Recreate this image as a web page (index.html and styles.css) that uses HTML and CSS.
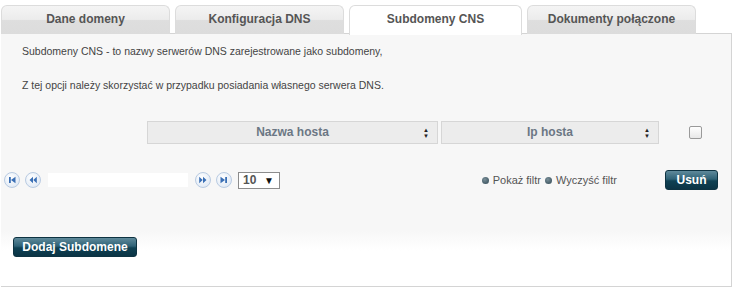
FILE: index.html
```html
<!DOCTYPE html>
<html lang="pl">
<head>
    <meta charset="UTF-8">
    <title>Subdomeny CNS</title>
    <link rel="stylesheet" href="styles.css">
</head>
<body>
    <div class="tabs">
        <div class="tab">Dane domeny</div>
        <div class="tab">Konfiguracja DNS</div>
        <div class="tab active">Subdomeny CNS</div>
        <div class="tab">Dokumenty połączone</div>
    </div>

    <div class="panel">
        <p class="info">Subdomeny CNS - to nazwy serwerów DNS zarejestrowane jako subdomeny,</p>
        <p class="info">Z tej opcji należy skorzystać w przypadku posiadania własnego serwera DNS.</p>

        <div class="grid-head">
            <div class="col col-name">Nazwa hosta <span class="sort">&#9650;<br>&#9660;</span></div>
            <div class="col col-ip">Ip hosta <span class="sort">&#9650;<br>&#9660;</span></div>
            <div class="check-cell"><span class="check"></span></div>
        </div>

        <div class="toolbar">
            <div class="pager">
                <span class="pbtn"><svg width="10" height="10" viewBox="0 0 10 10"><rect x="2" y="2" width="1.8" height="6" fill="#3a6fb5"/><path d="M8.5 1.8 L4 5 L8.5 8.2 Z" fill="#3a6fb5"/></svg></span>
                <span class="pbtn"><svg width="10" height="10" viewBox="0 0 10 10"><path d="M5 1.8 L1.5 5 L5 8.2 Z M8.8 1.8 L5.3 5 L8.8 8.2 Z" fill="#3a6fb5"/></svg></span>
                <span class="pinfo"></span>
                <span class="pbtn"><svg width="10" height="10" viewBox="0 0 10 10"><path d="M1.2 1.8 L4.7 5 L1.2 8.2 Z M5 1.8 L8.5 5 L5 8.2 Z" fill="#3a6fb5"/></svg></span>
                <span class="pbtn"><svg width="10" height="10" viewBox="0 0 10 10"><path d="M1.5 1.8 L6 5 L1.5 8.2 Z" fill="#3a6fb5"/><rect x="6.2" y="2" width="1.8" height="6" fill="#3a6fb5"/></svg></span>
                <span class="size">10 <span class="arrow">&#9660;</span></span>
            </div>
            <div class="filters">
                <span class="dot"></span>Pokaż filtr
                <span class="dot"></span>Wyczyść filtr
            </div>
            <button class="btn btn-del">Usuń</button>
        </div>

        <div class="bottom">
            <button class="btn">Dodaj Subdomene</button>
        </div>
    </div>
</body>
</html>
```

FILE: styles.css
```css
body {
    margin: 0;
    padding: 5px 1px 0 1px;
    background-color: #fff;
    font-family: "Liberation Sans", Arial, sans-serif;
    font-size: 10.5px;
    color: #444;
    width: 731px;
}

.tabs {
    display: flex;
    gap: 5px;
    height: 29px;
}

.tab {
    width: 167px;
    height: 28px;
    border: 1px solid #dcdcdc;
    border-bottom: none;
    border-radius: 6px 6px 0 0;
    background: linear-gradient(#f4f4f4 0%, #ececec 48%, #dedede 52%, #dcdcdc 100%);
    color: #555;
    font-weight: bold;
    font-size: 12px;
    text-align: center;
    line-height: 27px;
}

.tab.active {
    width: 171px;
    background: #fff;
    height: 29px;
    position: relative;
    z-index: 1;
}

.panel {
    border: 1px solid #d4d4d4;
    border-left: none;
    background: linear-gradient(#f7f7f7 0%, #f7f7f7 78%, #fff 86%, #fff 100%);
    height: 252px;
    margin-top: -1px;
}

.info {
    margin: 0;
    padding-left: 21px;
    line-height: 17px;
    color: #444;
}

.info:first-child {
    margin-top: 9px;
    margin-bottom: 17px;
}

.grid-head {
    display: flex;
    align-items: center;
    margin-top: 27px;
    padding-left: 146px;
    gap: 3px;
}

.col {
    height: 21px;
    border: 1px solid #d6d6d6;
    background: #ececec;
    color: #6b7784;
    font-weight: bold;
    font-size: 12px;
    text-align: center;
    line-height: 21px;
    position: relative;
}

.col-name {
    width: 289px;
}

.col-ip {
    width: 216px;
}

.sort {
    position: absolute;
    right: 8px;
    top: 5px;
    font-size: 6px;
    line-height: 6px;
    color: #222;
}

.check-cell {
    padding-left: 27px;
    display: flex;
}

.check {
    width: 11px;
    height: 11px;
    border: 1px solid #9a9a9a;
    border-radius: 2px;
    background: linear-gradient(#fff, #e8e8e8);
}

.toolbar {
    display: flex;
    align-items: center;
    margin-top: 26px;
    padding-left: 3px;
}

.pager {
    display: flex;
    align-items: center;
}

.pbtn {
    width: 14px;
    height: 14px;
    border-radius: 50%;
    border: 1px solid #b9cbe2;
    background: radial-gradient(circle at 40% 35%, #ffffff 0%, #e4ecf6 70%, #c9d8ec 100%);
    display: flex;
    align-items: center;
    justify-content: center;
    margin-right: 5px;
}

.pinfo {
    width: 140px;
    height: 14px;
    background: #fff;
    margin: 0 7px 0 2px;
}

.size {
    margin-left: 1px;
    width: 36px;
    height: 15px;
    border: 1px solid #8c8c8c;
    background: #fff;
    color: #555;
    font-weight: bold;
    font-size: 12px;
    line-height: 15px;
    padding-left: 4px;
    box-sizing: content-box;
    position: relative;
}

.arrow {
    position: absolute;
    right: 5px;
    top: 0;
    font-size: 10px;
    color: #111;
}

.filters {
    margin-left: auto;
    color: #555;
    display: flex;
    align-items: center;
    font-size: 11px;
}

.dot {
    width: 7px;
    height: 7px;
    border-radius: 50%;
    background: radial-gradient(circle at 40% 35%, #7a8f99, #2e4652);
    margin: 0 4px 0 4px;
}

.btn {
    font-family: "Liberation Sans", Arial, sans-serif;
    font-size: 12px;
    font-weight: bold;
    color: #fff;
    border: 1px solid #0e3342;
    border-radius: 3px;
    background: linear-gradient(#5f8a9b 0%, #2f6276 45%, #0f4153 55%, #0b3445 100%);
    height: 20px;
    padding: 0 7px;
    white-space: nowrap;
    cursor: pointer;
}

.btn-del {
    width: 53px;
    margin-left: 48px;
    margin-right: 13px;
}

.bottom {
    margin-top: 47px;
    padding-left: 12px;
}

.bottom .btn {
    width: 124px;
}
```
